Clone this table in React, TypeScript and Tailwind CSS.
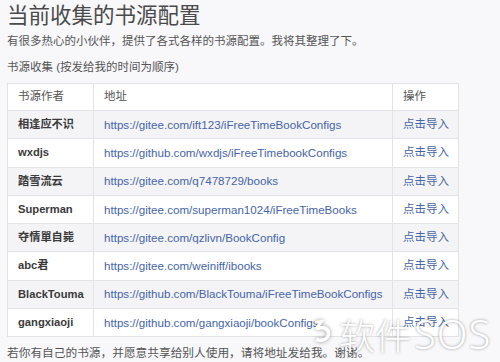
import React from "react";

const rows: [string, string][] = [
  ["相逢应不识", "https://gitee.com/ift123/iFreeTimeBookConfigs"],
  ["wxdjs", "https://github.com/wxdjs/iFreeTimebookConfigs"],
  ["踏雪流云", "https://gitee.com/q7478729/books"],
  ["Superman", "https://gitee.com/superman1024/iFreeTimeBooks"],
  ["夺情單自毙", "https://gitee.com/qzlivn/BookConfig"],
  ["abc君", "https://gitee.com/weiniff/ibooks"],
  ["BlackTouma", "https://github.com/BlackTouma/iFreeTimeBookConfigs"],
  ["gangxiaoji", "https://github.com/gangxiaoji/bookConfigs"],
];

const font = { fontFamily: '"Liberation Sans", Arial, "Noto Sans CJK SC", sans-serif' };

export default function App() {
  return (
    <div
      className="relative w-[500px] h-[362px] overflow-hidden bg-[#f8f8fb] text-[#444] px-[7px]"
      style={font}
    >
      <h1 className="h-[32px] leading-[32px] text-[21.5px] text-[#4a4a4a] font-normal">
        当前收集的书源配置
      </h1>
      <p className="h-[18px] leading-[18px] text-[11.5px] text-[#555]">
        有很多热心的小伙伴，提供了各式各样的书源配置。我将其整理了下。
      </p>
      <p className="mt-[8px] h-[18px] leading-[18px] text-[11.5px] text-[#555]">
        书源收集 (按发给我的时间为顺序)
      </p>
      <table className="mt-[7px] w-[451px] table-fixed border-collapse text-[11.6px] bg-white">
        <colgroup>
          <col className="w-[86px]" />
          <col className="w-[299px]" />
          <col className="w-[66px]" />
        </colgroup>
        <thead>
          <tr className="h-[27px]">
            <th className="border border-[#e1e3e6] px-[10px] text-left font-normal text-[11.5px] text-[#555]">
              书源作者
            </th>
            <th className="border border-[#e1e3e6] px-[10px] text-left font-normal text-[11.5px] text-[#555]">
              地址
            </th>
            <th className="border border-[#e1e3e6] px-[10px] text-left font-normal text-[11.5px] text-[#555]">
              操作
            </th>
          </tr>
        </thead>
        <tbody>
          {rows.map(([a, u], i) => (
            <tr key={a} className={`h-[28.25px] ${i % 2 === 0 ? "bg-[#f4f4f6]" : "bg-white"}`}>
              <td className="border border-[#e1e3e6] px-[10px] font-bold text-[11.2px] text-[#3a3a3a] whitespace-nowrap">
                {a}
              </td>
              <td className="border border-[#e1e3e6] px-[10px] text-[#4665a6] whitespace-nowrap">
                {u}
              </td>
              <td className="border border-[#e1e3e6] px-[10px] text-[#4665a6] text-[11.5px] whitespace-nowrap">
                点击导入
              </td>
            </tr>
          ))}
        </tbody>
      </table>
      <p className="mt-[7px] h-[18px] leading-[18px] text-[11.7px] text-[#555]">
        若你有自己的书源，并愿意共享给别人使用，请将地址发给我。谢谢。
      </p>

      <div
        className="pointer-events-none absolute left-[308px] top-[314px] flex w-max items-center gap-[3px] whitespace-nowrap text-white"
        style={{ textShadow: "0 0 3px rgba(0,0,0,0.4)" }}
      >
        <svg width="28" height="28" viewBox="0 0 38 42" className="self-start mt-[3px]" style={{ filter: "drop-shadow(0 0 2px rgba(0,0,0,0.4))" }}>
          <path
            d="M8 6 L22 4 L16 14 C26 12 33 18 31 27 C29 36 18 40 9 36 L12 31 C18 34 25 32 26 26 C27 20 20 17 12 20 L8 16 L14 9 L8 10 Z"
            fill="white"
          />
        </svg>
        <span className="text-[36px] leading-[40px] font-light" style={{ fontFamily: '"Noto Sans CJK SC", sans-serif' }}>
          软件
        </span>
        <span className="text-[40px] leading-[40px] font-light tracking-[1px]" style={{ fontFamily: '"Noto Sans", sans-serif' }}>
          SOS
        </span>
      </div>
    </div>
  );
}
